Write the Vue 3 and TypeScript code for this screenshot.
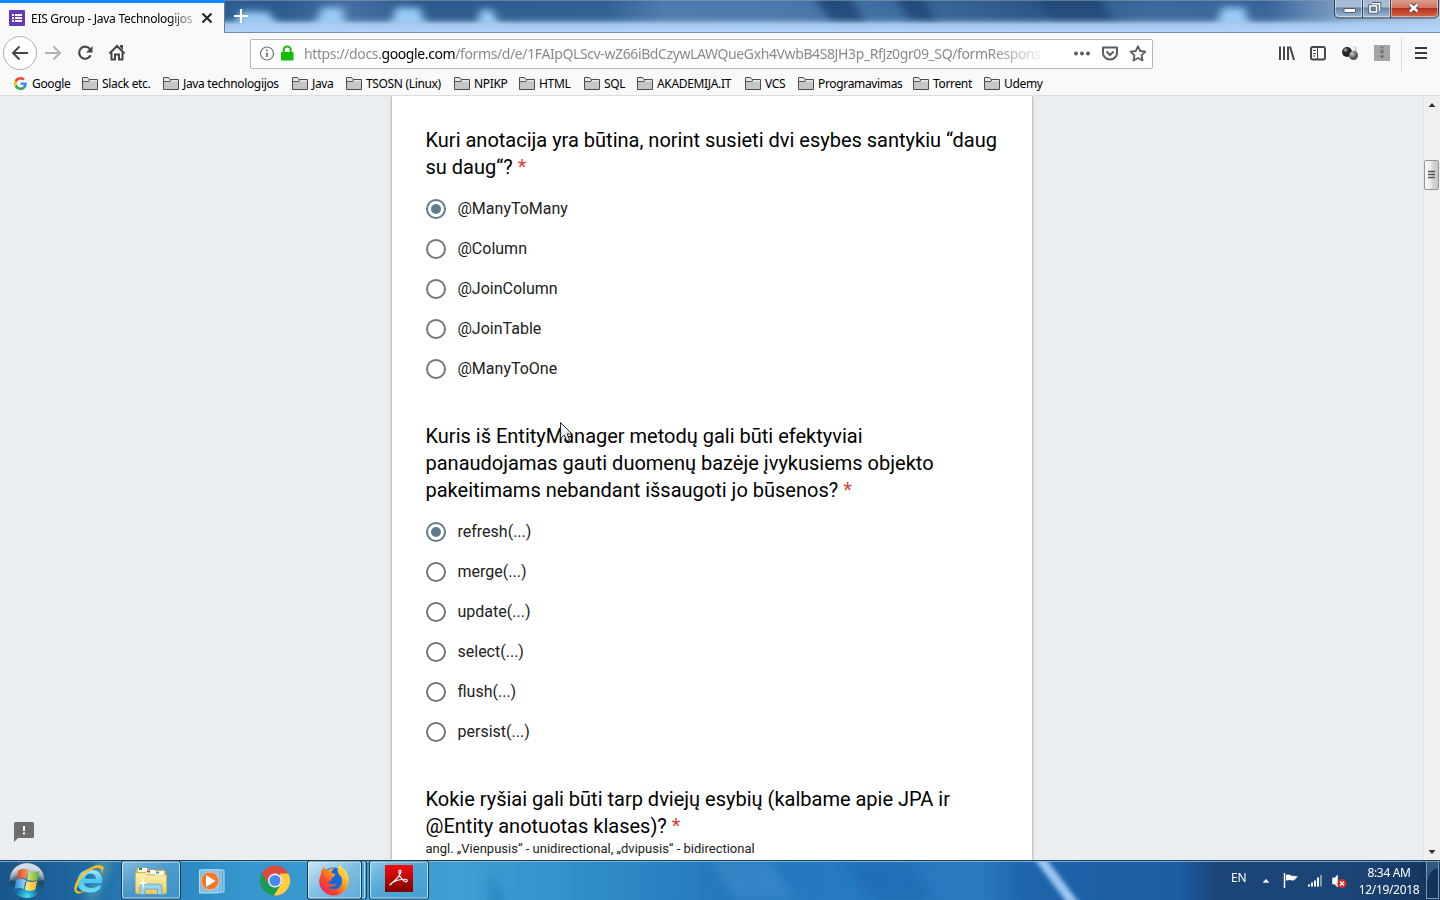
<script setup lang="ts">
interface Bookmark { label: string; width: number; google?: boolean }
interface Question { lines: string[]; options: string[]; selected: number; note?: string }

const bookmarks: Bookmark[] = [
  { label: 'Google', width: 68, google: true },
  { label: 'Slack etc.', width: 81 },
  { label: 'Java technologijos', width: 129 },
  { label: 'Java', width: 54 },
  { label: 'TSOSN (Linux)', width: 108 },
  { label: 'NPIKP', width: 65 },
  { label: 'HTML', width: 65 },
  { label: 'SQL', width: 53 },
  { label: 'AKADEMIJA.IT', width: 108 },
  { label: 'VCS', width: 53 },
  { label: 'Programavimas', width: 115 },
  { label: 'Torrent', width: 71 },
  { label: 'Udemy', width: 70 },
]

const questions: Question[] = [
  {
    lines: ['Kuri anotacija yra būtina, norint susieti dvi esybes santykiu “daug', 'su daug“?'],
    options: ['@ManyToMany', '@Column', '@JoinColumn', '@JoinTable', '@ManyToOne'],
    selected: 0,
  },
  {
    lines: ['Kuris iš EntityManager metodų gali būti efektyviai', 'panaudojamas gauti duomenų bazėje įvykusiems objekto', 'pakeitimams nebandant išsaugoti jo būsenos?'],
    options: ['refresh(...)', 'merge(...)', 'update(...)', 'select(...)', 'flush(...)', 'persist(...)'],
    selected: 0,
  },
  {
    lines: ['Kokie ryšiai gali būti tarp dviejų esybių (kalbame apie JPA ir', '@Entity anotuotas klases)?'],
    options: [],
    selected: -1,
    note: 'angl. „Vienpusis“ - unidirectional, „dvipusis“ - bidirectional',
  },
]
</script>

<template>
  <div class="screen">
    <header class="titlebar">
      <svg class="glass" width="1440" height="33" viewBox="0 0 1440 33" preserveAspectRatio="none">
        <defs>
          <linearGradient id="sky" x1="0" x2="1" y1="0" y2="0">
            <stop offset="0" stop-color="#2d5c8e" /><stop offset=".2" stop-color="#2b5a90" />
            <stop offset=".24" stop-color="#456fa4" /><stop offset=".29" stop-color="#2b598d" />
            <stop offset=".42" stop-color="#2f5f93" /><stop offset=".46" stop-color="#4c79ad" />
            <stop offset=".54" stop-color="#4a77ab" /><stop offset=".6" stop-color="#3f6fa3" />
            <stop offset=".72" stop-color="#2a5486" /><stop offset=".8" stop-color="#3a689c" />
            <stop offset=".88" stop-color="#37639a" /><stop offset=".94" stop-color="#8ba8c9" />
            <stop offset="1" stop-color="#b3cae4" />
          </linearGradient>
          <linearGradient id="haze" x1="0" x2="0" y1="0" y2="1">
            <stop offset="0" stop-color="#b4d5f7" stop-opacity="0" /><stop offset=".5" stop-color="#a8cbef" stop-opacity=".04" />
            <stop offset=".62" stop-color="#a8cbef" stop-opacity=".25" />
            <stop offset=".76" stop-color="#adcff4" stop-opacity=".9" /><stop offset="1" stop-color="#b3d5f9" />
          </linearGradient>
          <filter id="soft" x="-50%" y="-50%" width="200%" height="200%"><feGaussianBlur stdDeviation="4" /></filter>
        </defs>
        <rect width="1440" height="33" fill="url(#sky)" />
        <g filter="url(#soft)">
          <path d="M812 -5H850L872 35H840ZM894 -5H922L944 35H918ZM1035 -5H1100L1120 35H1060Z" fill="#214a78" />
          <path d="M240 12H268L278 28H236ZM322 8H342L346 28H314ZM396 8H420L426 28H390ZM480 10H492L500 28H478ZM1222 8H1244L1250 28H1216Z" fill="#96ccf5" />
        </g>
        <rect width="1440" height="33" fill="url(#haze)" />
        <rect width="1440" height="1" fill="#8c9db0" opacity=".6" />
      </svg>
      <div class="tab">
        <svg width="16" height="16" viewBox="0 0 16 16"><rect width="16" height="16" rx="1" fill="#673ab7" /><path d="M3 4h2v2H3zM6 4h7v2H6zM3 7h2v2H3zM6 7h7v2H6zM3 10h2v2H3zM6 10h7v2H6z" fill="#fff" /></svg>
        <span class="tab-title">EIS Group - Java Technologijos</span>
        <svg class="close" width="12" height="12" viewBox="0 0 12 12"><path d="M1.5 1.5l9 9M10.5 1.5l-9 9" stroke="#222" stroke-width="2" /></svg>
      </div>
      <svg class="plus" width="16" height="16" viewBox="0 0 16 16"><path d="M8 1v14M1 8h14" stroke="#fff" stroke-width="2" /></svg>
      <svg class="winbtns" width="106" height="19" viewBox="0 0 106 19">
        <defs>
          <linearGradient id="btn" x1="0" x2="0" y1="0" y2="1"><stop offset="0" stop-color="#a4b8cf" /><stop offset=".45" stop-color="#a9bdd4" /><stop offset=".5" stop-color="#6583a7" /><stop offset="1" stop-color="#a6bed8" /></linearGradient>
          <linearGradient id="redbtn" x1="0" x2="0" y1="0" y2="1"><stop offset="0" stop-color="#dc9c8e" /><stop offset=".45" stop-color="#cf7665" /><stop offset=".5" stop-color="#b92f1a" /><stop offset="1" stop-color="#d06a4b" /></linearGradient>
        </defs>
        <path d="M1 -2H104V13Q104 18 99 18H6Q1 18 1 13Z" fill="url(#btn)" />
        <path d="M57 0H104V13Q104 17 99 17H57Z" fill="url(#redbtn)" />
        <path d="M.5 0V13Q.5 18 5.500 18H99Q104.500 18 104.500 13V0M28.500 0V18M56.500 0V18" fill="none" stroke="#34455e" />
        <path d="M1.500 0V13Q1.500 16.500 5 16.500H27.500V0M29.500 0V16.500H55.500V0M57.500 0V16.500H99Q103.500 16.500 103.500 13V0" fill="none" stroke="#fff" opacity=".45" />
        <rect x="10" y="8.500" width="11.500" height="4" rx=".5" fill="#fff" stroke="#535d6d" />
        <g fill="none" stroke="#535d6d" stroke-width="3.400"><path d="M38 3.800h7.500v7" /><rect x="36" y="6" width="6.500" height="6" /></g>
        <g fill="none" stroke="#fff" stroke-width="1.600"><path d="M38 3.800h7.500v7" /><rect x="36" y="6" width="6.500" height="6" /></g>
        <path d="M76 4.500l7.500 7M83.500 4.500l-7.500 7" stroke="#5f4145" stroke-width="4.500" />
        <path d="M76 4.500l7.500 7M83.500 4.500l-7.500 7" stroke="#fff" stroke-width="2.600" />
      </svg>
    </header>

    <nav class="toolbar">
      <svg class="navicons" width="130" height="41" viewBox="0 0 130 41">
        <circle cx="20" cy="20" r="16.500" fill="#fff" stroke="#b1b1b1" />
        <path d="M28 20H13M19.500 13.500L13 20l6.500 6.500" fill="none" stroke="#45454a" stroke-width="2" />
        <path d="M45 20h15M53.500 13.500L60 20l-6.500 6.500" fill="none" stroke="#b1b1b4" stroke-width="2" />
        <path d="M90 16.200a6 6 0 1 0 .6 6" fill="none" stroke="#45454a" stroke-width="2.200" /><path d="M92.500 13v6.500H86Z" fill="#45454a" />
        <path d="M109.500 20.500L117 13l7.500 7.500M111.500 19.500v7h3.500v-5h4v5h3.500v-7" fill="none" stroke="#45454a" stroke-width="2" /><path d="M120 12h3v5l-3-3z" fill="#45454a" />
      </svg>
      <div class="urlbar">
        <svg width="46" height="28" viewBox="0 0 46 28">
          <circle cx="16" cy="13.500" r="6.500" fill="none" stroke="#737373" stroke-width="1.200" /><path d="M16 12.500v4.500M16 9.500v1.600" stroke="#666" stroke-width="1.600" />
          <rect x="30" y="12" width="12.500" height="8.500" rx="1" fill="#12bc00" /><path d="M32.700 12.500v-2.500a3.500 3.500 0 0 1 7 0V12.500" fill="none" stroke="#12bc00" stroke-width="2" />
        </svg>
        <span class="url">https://docs.<b>google.com</b>/forms/d/e/1FAIpQLScv-wZ66iBdCzywLAWQueGxh4VwbB4S8JH3p_RfJz0gr09_SQ/formRespons</span>
        <svg class="urlicons" width="80" height="28" viewBox="0 0 80 28">
          <g fill="#5b5b60"><circle cx="6" cy="13.500" r="2" /><circle cx="12" cy="13.500" r="2" /><circle cx="18" cy="13.500" r="2" /></g>
          <path d="M33 7.500h14v5.500a7 6.500 0 0 1-14 0Z" fill="none" stroke="#5b5b60" stroke-width="2" stroke-linejoin="round" /><path d="M36.500 11.500l3.500 3.500 3.500-3.500" fill="none" stroke="#5b5b60" stroke-width="2" />
          <path d="M68 6.300l2.200 4.700 5.200.7-3.800 3.600.9 5.200-4.500-2.500-4.500 2.500.9-5.200-3.800-3.600 5.200-.7Z" fill="none" stroke="#5b5b60" stroke-width="1.800" stroke-linejoin="round" />
        </svg>
      </div>
      <svg class="tools" width="170" height="41" viewBox="0 0 170 41">
        <defs>
          <radialGradient id="ballDark" cx=".35" cy=".3"><stop offset="0" stop-color="#bbb" /><stop offset=".5" stop-color="#303030" /><stop offset="1" stop-color="#222" /></radialGradient>
          <radialGradient id="ballMid" cx=".35" cy=".3"><stop offset="0" stop-color="#ccc" /><stop offset="1" stop-color="#555" /></radialGradient>
          <radialGradient id="ballLight" cx=".4" cy=".3"><stop offset="0" stop-color="#fff" /><stop offset="1" stop-color="#ccc" /></radialGradient>
        </defs>
        <path d="M10 13.500V27M14 13.500V27M18 13.500V27M20 13.500L24 27" fill="none" stroke="#45454a" stroke-width="2" />
        <rect x="41" y="14" width="14" height="12.500" rx="2" fill="none" stroke="#45454a" stroke-width="2" /><path d="M47.500 14v12M43 17.500h3M43 20.500h3M43 23h2" stroke="#45454a" />
        <circle cx="83" cy="17" r="4" fill="url(#ballLight)" /><circle cx="77" cy="19" r="5" fill="url(#ballDark)" /><circle cx="83.500" cy="22.500" r="4.500" fill="url(#ballMid)" />
        <rect x="104" y="12" width="16" height="16" fill="#a5a5a5" /><path d="M110.500 14.500h3M110.500 17.500h3" stroke="#777" stroke-width="1.500" /><path d="M109.500 18.500h5L112 21ZM109.500 22.500h5L112 25.500Z" fill="#6a6a6a" />
        <path d="M131.500 4v34" stroke="#dcdcdc" />
        <path d="M145 15h12M145 20h12M145 25h12" stroke="#38383d" stroke-width="2" />
      </svg>
    </nav>

    <nav class="bookmarks">
      <div v-for="b in bookmarks" :key="b.label" class="bookmark" :style="{ width: b.width + 'px' }">
        <svg v-if="b.google" class="bicon google" width="13" height="13" viewBox="0 0 48 48">
          <path d="M24 9.500c3.500 0 6.700 1.200 9.200 3.600l6.900-6.900C35.900 2.400 30.500 0 24 0 14.600 0 6.500 5.400 2.600 13.200l8 6.200C12.400 13.700 17.700 9.500 24 9.500Z" fill="#ea4335" />
          <path d="M47 24.500c0-1.600-.2-3.100-.4-4.500H24v9h12.900c-.6 3-2.300 5.500-4.800 7.200l7.700 6C44.400 38 47 31.800 47 24.500Z" fill="#4285f4" />
          <path d="M10.500 28.600a14.500 14.500 0 0 1 0-9.200l-8-6.200a24 24 0 0 0 0 21.600Z" fill="#fbbc05" />
          <path d="M24 48c6.500 0 11.900-2.100 15.900-5.800l-7.700-6c-2.200 1.500-4.900 2.300-8.200 2.300-6.300 0-11.600-4.200-13.500-9.900l-8 6.200C6.500 42.600 14.600 48 24 48Z" fill="#34a853" />
        </svg>
        <svg v-else class="bicon" width="17" height="15" viewBox="0 0 17 15"><path d="M.5 13.500V1.500H5.500L7 3.500H15.500V13.500Z" fill="#e6e6e6" stroke="#4c4c4c" stroke-linejoin="round" /><path d="M1 5.500H15V13H1Z" fill="#c6c6c6" /><path d="M1 5.500H7L8 3.500" fill="none" stroke="#5a5a5a" /></svg>
        <span>{{ b.label }}</span>
      </div>
    </nav>

    <main class="page">
      <section class="card">
        <article v-for="(q, qi) in questions" :key="qi" class="question">
          <h2><template v-for="(line, li) in q.lines" :key="li">{{ line }}<br v-if="li < q.lines.length - 1"></template> <i>*</i></h2>
          <p v-if="q.note" class="note">{{ q.note }}</p>
          <div v-if="q.options.length" class="options">
            <div v-for="(o, oi) in q.options" :key="o" class="option">
              <span class="radio" :class="{ checked: oi === q.selected }"></span>
              <span class="option-label">{{ o }}</span>
            </div>
          </div>
        </article>
      </section>
      <div class="scrollbar">
        <svg width="16" height="764" viewBox="0 0 16 764">
          <defs><linearGradient id="thumb"><stop offset="0" stop-color="#fafafa" /><stop offset=".45" stop-color="#ececec" /><stop offset=".55" stop-color="#d6d6d8" /><stop offset="1" stop-color="#c5c5c8" /></linearGradient></defs>
          <path d="M4.500 11h7L8 7ZM4.500 754h7L8 758Z" fill="#333" />
          <rect x=".5" y="64.500" width="14" height="29" rx="1.500" fill="url(#thumb)" stroke="#949494" />
          <path d="M4 75.500h7M4 78.500h7M4 81.500h7" stroke="#555" stroke-width="1.500" />
        </svg>
      </div>
      <svg class="feedback" width="20" height="20" viewBox="0 0 20 20"><path d="M1.500 0H18.500Q20 0 20 1.500V14.500Q20 16 18.500 16H4L0 20V1.500Q0 0 1.500 0Z" fill="#6b6d6f" /><path d="M9 4h2v5H9zM9 10.500h2v2H9z" fill="#fff" /></svg>
      <svg class="cursor" width="14" height="21" viewBox="0 0 14 21"><path d="M.5.500V16.500L4.200 13L6.800 19L9.500 17.800L7 12H12Z" fill="#f4f6f8" fill-opacity=".92" stroke="#1d2a3a" /></svg>
    </main>

    <footer class="taskbar">
      <svg class="taskart" width="1440" height="40" viewBox="0 0 1440 40">
        <defs>
          <linearGradient id="bar"><stop offset="0" stop-color="#1a568d" /><stop offset=".045" stop-color="#1d639d" /><stop offset=".1" stop-color="#2880ba" /><stop offset=".17" stop-color="#3597ce" /><stop offset=".32" stop-color="#3f9fd3" /><stop offset=".43" stop-color="#2d88c5" /><stop offset=".5" stop-color="#2579bd" /><stop offset=".59" stop-color="#257ac1" /><stop offset=".68" stop-color="#2c78be" /><stop offset=".71" stop-color="#1e66ac" /><stop offset=".82" stop-color="#1c5ba2" /><stop offset=".845" stop-color="#1b4579" /><stop offset=".94" stop-color="#1b4476" /><stop offset="1" stop-color="#15335b" /></linearGradient>
          <linearGradient id="active" x1="0" y1="0" x2="1" y2="1"><stop offset="0" stop-color="#d8effd" stop-opacity=".85" /><stop offset=".5" stop-color="#9acbe9" stop-opacity=".65" /><stop offset="1" stop-color="#69b3df" stop-opacity=".6" /></linearGradient>
          <linearGradient id="idle" x1="0" y1="0" x2="1" y2="1"><stop offset="0" stop-color="#b8dff5" stop-opacity=".7" /><stop offset=".5" stop-color="#65b0dc" stop-opacity=".5" /><stop offset="1" stop-color="#4b9fd0" stop-opacity=".5" /></linearGradient>
          <radialGradient id="orb" cx=".5" cy=".95" r=".8"><stop offset="0" stop-color="#3ee4f6" /><stop offset=".4" stop-color="#126c9e" /><stop offset=".75" stop-color="#1c4567" /><stop offset="1" stop-color="#9cb4c7" /></radialGradient>
          <linearGradient id="orbShine" x1="0" y1="0" x2="0" y2="1"><stop offset="0" stop-color="#fff" stop-opacity=".65" /><stop offset="1" stop-color="#fff" stop-opacity=".15" /></linearGradient>
          <linearGradient id="flagRed"><stop offset="0" stop-color="#d8431d" /><stop offset="1" stop-color="#fa9b5c" /></linearGradient>
          <linearGradient id="flagGreen"><stop offset="0" stop-color="#d4e88a" /><stop offset="1" stop-color="#62ab2c" /></linearGradient>
          <linearGradient id="flagBlue"><stop offset="0" stop-color="#2b86d4" /><stop offset="1" stop-color="#a4d8f8" /></linearGradient>
          <linearGradient id="flagYellow"><stop offset="0" stop-color="#ffec8b" /><stop offset="1" stop-color="#f9b51c" /></linearGradient>
          <linearGradient id="ie" x1="0" y1="0" x2="0" y2="1"><stop offset="0" stop-color="#a9ecff" /><stop offset=".5" stop-color="#4bc6f5" /><stop offset="1" stop-color="#72def9" /></linearGradient>
          <linearGradient id="folder" x1="0" y1="0" x2="0" y2="1"><stop offset="0" stop-color="#fff3b4" /><stop offset="1" stop-color="#eac965" /></linearGradient>
          <linearGradient id="fox" x1="1" y1="0" x2="0" y2="1"><stop offset=".1" stop-color="#fff44f" /><stop offset=".4" stop-color="#ffa020" /><stop offset=".65" stop-color="#ff4a28" /><stop offset="1" stop-color="#e90d75" /></linearGradient>
          <linearGradient id="pdf" x1="0" y1="0" x2="0" y2="1"><stop offset="0" stop-color="#f40c0c" /><stop offset="1" stop-color="#7e0000" /></linearGradient>
          <filter id="blur2"><feGaussianBlur stdDeviation="2" /></filter>
          <filter id="blur5"><feGaussianBlur stdDeviation="5" /></filter>
        </defs>
        <rect width="1440" height="40" fill="url(#bar)" />
        <g filter="url(#blur5)"><path d="M710 0H770L795 40H735Z" fill="#3c8ccb" opacity=".6" /><path d="M845 0H910L935 40H870Z" fill="#1766ac" opacity=".5" /><path d="M490 10L505 45H490Z" fill="#1274ae" opacity=".5" /><path d="M100 0L85 40H95L112 0Z" fill="#6fb4a8" opacity=".6" /></g>
        <path d="M1032 -4H1044L1080 44H1068Z" fill="#9cc6f0" filter="url(#blur2)" />
        <path d="M0 .5H1440" stroke="#223d54" /><path d="M0 1.500H1440" stroke="#8fc0df" opacity=".8" />

        <circle cx="27" cy="20.500" r="18" fill="url(#orb)" stroke="#2b587d" /><path d="M10 20a17 16.500 0 0 1 34 0Q27 24 10 20Z" fill="url(#orbShine)" />
        <path d="M18.500 10.500Q23 7.500 28 10L26 18.800Q21.500 16.800 16.500 19Z" fill="url(#flagRed)" /><path d="M29 10.800Q34 13.500 39.500 10.800L37.500 19.500Q32 22 27 19.300Z" fill="url(#flagGreen)" />
        <path d="M16.200 20.200Q21 18 25.700 20.200L23.800 29Q20 27 14.500 29Z" fill="url(#flagBlue)" /><path d="M26.700 20.700Q31 23.300 37.200 20.800L35.200 29.800Q30 32 24.800 29.600Z" fill="url(#flagYellow)" />

        <path d="M98.500 25Q95 28 90 27.500Q84.500 27 84.500 23.500H102.500Q104 10 91 9Q78 9.500 77 21.500Q78 33 90 33Q99.500 33 102 25ZM85 18.500Q86 14 90.500 14Q95 14 95.500 18.500Z" fill="url(#ie)" stroke="#247eb9" stroke-width=".7" />
        <path d="M98 8.500C105 3 104 9 101.500 13Q103 5 92 9Q79 16 76 30Q80 34 85 30.500Q78 36 75 31.500C72.500 25 81 12 91 7.500Q101 3 102 7" fill="#f8ca2b" stroke="#e2a616" stroke-width=".5" />

        <g stroke="#1b3d58"><rect x="121.500" y="1" width="59" height="38" rx="2" fill="url(#idle)" /><rect x="307.500" y="1" width="59" height="38" rx="2" fill="url(#idle)" /><rect x="307.500" y="1" width="54" height="38" rx="2" fill="url(#active)" /><rect x="369.500" y="1" width="59" height="38" rx="2" fill="url(#idle)" /></g>
        <g fill="none" stroke="#d9f0fb" opacity=".75"><rect x="122.500" y="2" width="57" height="36" rx="1.500" /><path d="M362.500 2H364.500V38H362.500" /><rect x="308.500" y="2" width="52" height="36" rx="1.500" /><rect x="370.500" y="2" width="57" height="36" rx="1.500" /></g>

        <path d="M136 8H147L149 10H165L166 15V33H136Z" fill="#e2bc56" stroke="#c39a3f" stroke-width=".7" /><path d="M138 8h9v4h-9zM146 10h9v4h-9zM155 11h9v4h-9z" fill="#fff" /><path d="M139 8h3v2h-3z" fill="#1da334" /><path d="M147 10.500h3v2h-3z" fill="#d62c1a" /><path d="M156 11.500h3v2h-3z" fill="#3295d5" />
        <path d="M135.500 13H145L147 15H166.500V32Q166.500 34 164 34H138Q135.500 34 135.500 32Z" fill="url(#folder)" stroke="#d6ae4e" stroke-width=".5" />
        <path d="M140 34.500V28Q140 24 145 24H158Q162 24 162 28V34.500H157.500V29H145V34.500Z" fill="#9bd5ec" stroke="#5a9fc1" stroke-width=".8" /><path d="M143 17l1 5 4 1-4 1-1 5-1-5-4-1 4-1z" fill="#fff" />

        <path d="M203 10H224V32H203Z" fill="#63aed8" stroke="#a9d9ef" /><path d="M201 10H221V32.500H201Z" fill="#6db6dc" stroke="#b4dcf0" stroke-width=".8" /><path d="M199.500 10H218V33H199.500Z" fill="#7fbfe2" stroke="#b5ddf1" /><circle cx="210" cy="21" r="9" fill="#f0782a" stroke="#ffd0a8" stroke-width=".7" /><path d="M206 15V27L215.500 21Z" fill="#fff" />

        <circle cx="275" cy="20.500" r="15" fill="#dd4b3e" /><path d="M262 13A15 15 0 0 0 274 35.500L281 24 275 20.500 268.900 24Z" fill="#1a9c57" /><path d="M288.300 13.500A15 15 0 0 1 274 35.500L281.100 24 280 13.500Z" fill="#ffcf40" /><circle cx="275" cy="20.500" r="7" fill="#f5f5f5" /><circle cx="275" cy="20.500" r="5.600" fill="#4a88f5" />

        <circle cx="333.500" cy="19.500" r="12" fill="#1668dc" />
        <path d="M340 4.500Q342 8 345.500 11Q349.500 16 348.500 22A14.700 14.700 0 0 1 319.200 22Q318.800 18 321 14.500Q321 9.500 324 6.500Q324.500 9.500 327 10.500Q331 7.500 334.500 8Q331 10.500 331.500 13L335.500 14Q334.500 17 331.500 18L331.500 20.500Q328.500 21 328 23Q331 25.500 336.500 23.500Q333 28.500 327 27Q334 32 340 27Q343 23 341.500 17Q338 14.500 337.500 10Q338 6.500 340 4.500Z" fill="url(#fox)" />

        <rect x="385" y="5" width="28" height="27" fill="url(#pdf)" /><path d="M390.500 24.500C394 20.500 399.500 18 401 12C401.200 9.500 399 9.500 398.800 11.500C399 16 403 21.500 405.500 21.800C407.500 22 408 19.500 405.500 19.300C401 19 396.500 20.500 392.500 22.500C389.500 24.200 389.800 25.500 390.500 24.500Z" fill="none" stroke="#fff" stroke-width="1.200" />

        <path d="M1262 23H1270L1266 18.500Z" fill="#fff" stroke="#12345a" stroke-width=".6" />
        <path d="M1284.500 13V28" stroke="#fff" stroke-width="1.500" /><path d="M1285.500 14.500Q1289 13.500 1291.500 15.500L1298 16Q1296 20 1292.500 21Q1291 19.500 1285.500 21Z" fill="#fff" stroke="#152e50" stroke-width=".5" />
        <path d="M1308 24.500h2v2h-2zM1311 22.500h2v4h-2zM1314 20.500h2v6h-2zM1317 17.500h2v9h-2z" fill="#fff" /><path d="M1320 15h2v11.500h-2z" fill="#7f98b4" />
        <path d="M1332 17.500h2.500L1338 14V28L1334.500 24.500H1332Z" fill="#fff" stroke="#26415f" stroke-width=".5" /><circle cx="1342" cy="23.500" r="4.500" fill="#df2b24" /><path d="M1340 21.500l4 4M1344 21.500l-4 4" stroke="#fff" stroke-width="1.300" />
        <rect x="1426.500" y="1.500" width="12" height="37" fill="#31587f" stroke="#7897b5" /><path d="M1427 21Q1431 8 1438 8V38H1427Z" fill="#163459" />
      </svg>
      <span class="language">EN</span>
      <div class="clock"><div>8:34 AM</div><div>12/19/2018</div></div>
    </footer>
  </div>
</template>

<style>
html, body { margin: 0; overflow: hidden; }
</style>
<style scoped>
* { box-sizing: border-box; }
svg { display: block; flex: none; }
.screen { width: 1440px; height: 900px; display: flex; flex-direction: column; overflow: hidden; font-family: "Noto Sans", "Open Sans", sans-serif; font-size: 12px; background: #f9f9fa; }
.titlebar { height: 33px; flex: none; display: flex; position: relative; border-bottom: 1px solid #7690ad; }
.glass { position: absolute; left: 0; top: 0; height: 32px; }
.tab { position: relative; z-index: 1; width: 225px; height: 33px; padding: 0 12px 0 9px; display: flex; align-items: center; background: #f9f9fa; border-top: 3px solid #0a84ff; border-right: 1px solid #60809f; }
.tab-title { margin-left: 6px; width: 164px; flex: none; white-space: nowrap; overflow: hidden; letter-spacing: -.27px; color: #000; -webkit-mask-image: linear-gradient(90deg, #000 84%, rgba(0, 0, 0, .2)); mask-image: linear-gradient(90deg, #000 84%, rgba(0, 0, 0, .2)); }
.close { margin-left: 6px; }
.plus { position: relative; margin: 8px 0 0 8px; }
.winbtns { position: relative; margin-left: auto; }
.toolbar { height: 41px; flex: none; display: flex; align-items: center; }
.urlbar { width: 903px; height: 30px; margin-left: 120px; display: flex; align-items: center; flex: none; border: 1px solid #b7b7b9; border-radius: 2px; background: #fff; }
.url { width: 740px; flex: none; margin-left: 7px; white-space: nowrap; overflow: hidden; font-size: 14px; letter-spacing: -.39px; color: #8a8a8a; -webkit-mask-image: linear-gradient(90deg, #000 93%, rgba(0, 0, 0, .1)); mask-image: linear-gradient(90deg, #000 93%, rgba(0, 0, 0, .1)); }
.url b { font-weight: 400; color: #000; }
.urlicons { margin-left: 26px; }
.tools { margin-left: 117px; }
.bookmarks { height: 22px; flex: none; display: flex; padding-left: 14px; border-bottom: 1px solid #dcdcdd; }
.bookmark { display: flex; align-items: center; height: 19px; flex: none; white-space: nowrap; letter-spacing: -.34px; color: #000; }
.bicon { margin-right: 3px; }
.google { margin-right: 5px; }
.page { position: relative; height: 764px; flex: none; background: #eaeef1; overflow: hidden; }
.card { width: 640px; height: 764px; margin-left: 392px; padding: 31px 34px 0; background: #fff; box-shadow: 0 0 3px rgba(0, 0, 0, .45); }
.question { margin-bottom: 34px; font-family: Roboto, sans-serif; }
h2 { margin: 0 0 0 -.5px; font-size: 20px; line-height: 27px; font-weight: 400; color: #000; white-space: nowrap; }
h2 i { font-style: normal; color: #db4437; }
.note { margin: 0 0 0 -.5px; font-size: 13px; line-height: 17px; color: #212121; }
.options { margin-top: 8px; }
.option { height: 40px; display: flex; align-items: center; }
.radio { width: 20px; height: 20px; border: 2px solid #757575; border-radius: 50%; display: flex; align-items: center; justify-content: center; }
.radio.checked { border-color: #607d8b; }
.radio.checked::after { content: ""; width: 10px; height: 10px; border-radius: 50%; background: #607d8b; }
.option-label { margin-left: 11.5px; font-size: 16px; line-height: 20px; color: #212121; }
.scrollbar { position: absolute; right: 0; top: 0; width: 17px; height: 764px; background: #f0f0f0; border-left: 1px solid #e3e3e3; }
.feedback { position: absolute; left: 14px; top: 726px; }
.cursor { position: absolute; left: 560px; top: 326px; }
.taskbar { position: relative; height: 40px; flex: none; display: flex; color: #fff; }
.taskart { position: absolute; left: 0; top: 0; }
.language { position: relative; margin: 9px 0 0 1231px; width: 20px; line-height: 17px; letter-spacing: -.2px; }
.clock { position: relative; margin: 4px 0 0 104px; width: 68px; text-align: center; line-height: 17px; letter-spacing: -.35px; white-space: nowrap; }
</style>
